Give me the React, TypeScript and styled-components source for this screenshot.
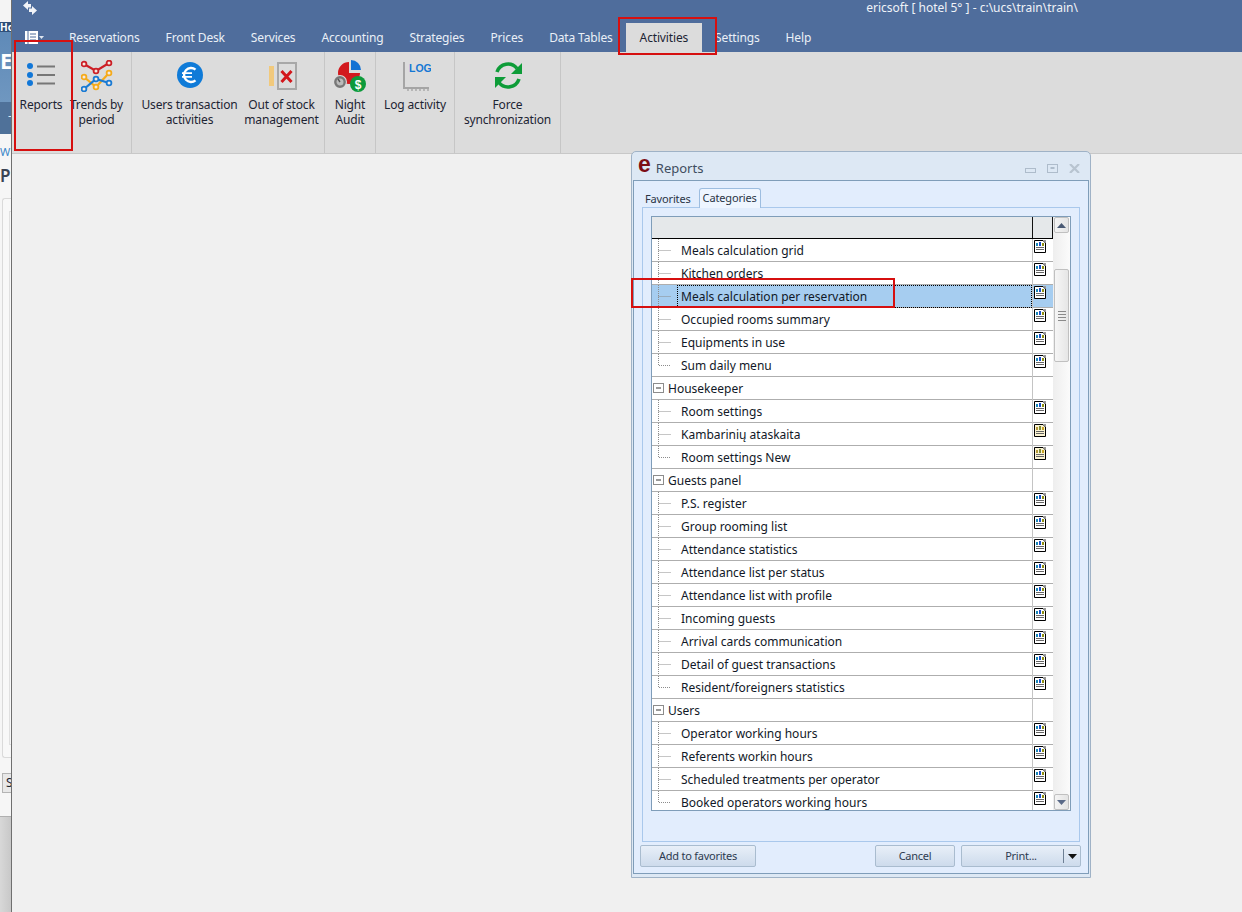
import React from 'react'
import styled, { createGlobalStyle } from 'styled-components'

const GlobalStyle = createGlobalStyle`
  *, *::before, *::after {
    box-sizing: border-box;
  }
  html, body {
    margin: 0;
    padding: 0;
    height: 912px;
    overflow: hidden;
    background: #f0f0f0;
    font-family: "Noto Sans", "Open Sans", sans-serif;
    font-size: 12px;
    color: #1c2433;
  }
`

const Page = styled.div`
  display: flex;
  width: 1242px;
  height: 912px;
  overflow: hidden;
  position: relative;
`

/* window behind the app, only 11px of it shows */
const BehindWindow = styled.div`
  width: 12px;
  flex: none;
  display: flex;
  flex-direction: column;
  overflow: hidden;
  background: #f6f6f6;
  border-right: 1px solid #6f6f6f;
`
const BehindTop = styled.div`
  height: 22px;
  flex: none;
  background: #f4f4f4;
`
const BehindHead = styled.div`
  height: 10px;
  flex: none;
  background: #2f4f78;
  color: #fff;
  font-size: 10px;
  font-weight: 700;
  line-height: 10px;
  white-space: nowrap;
`
const BehindBanner = styled.div`
  height: 70px;
  flex: none;
  background: linear-gradient(#5f8ab8, #6f97c0);
  color: #fff;
  font-size: 22px;
  font-weight: 700;
  line-height: 56px;
`
const BehindStrip = styled.div`
  height: 32px;
  flex: none;
  background: #4f7199;
  color: #dfe8f2;
  line-height: 28px;
  padding-left: 8px;
`
const BehindLink = styled.div`
  margin-top: 10px;
  height: 16px;
  flex: none;
  color: #3a86c8;
  font-size: 11px;
  line-height: 16px;
`
const BehindTitle = styled.div`
  margin-top: 5px;
  height: 22px;
  flex: none;
  color: #3b4454;
  font-size: 17px;
  font-weight: 600;
  line-height: 22px;
`
const BehindPanel = styled.div`
  margin: 11px 0 0 2px;
  height: 560px;
  flex: none;
  padding: 12px 0 12px 6px;
  border: 1px solid #dadada;
  border-right: 0;
  border-radius: 3px 0 0 3px;
  background: #f8f8f8;
`
const BehindInner = styled.div`
  height: 100%;
  border: 1px solid #e0e0e0;
  border-right: 0;
`
const BehindButton = styled.div`
  margin-top: 15px;
  margin-left: 2px;
  height: 20px;
  flex: none;
  border: 1px solid #b4b4b4;
  border-right: 0;
  background: #e8e8e8;
  font-size: 12px;
  line-height: 18px;
  padding-left: 3px;
`
const BehindFooter = styled.div`
  margin-top: 23px;
  flex: 1;
  border-top: 1px solid #b0b0b0;
  background: linear-gradient(90deg, #d8d8d8, #c8c8c8);
`

const Main = styled.div`
  flex: 1;
  display: flex;
  flex-direction: column;
  min-width: 0;
`
const TitleBar = styled.header`
  background: #4f6d9c;
  height: 52px;
  display: flex;
  flex-direction: column;
  flex: none;
`
const TitleRow = styled.div`
  height: 23px;
  flex: none;
  display: flex;
  justify-content: space-between;
  padding: 0 164px 0 10px;
`
const TitleText = styled.div`
  color: #f0f3f8;
  font-size: 12px;
  line-height: 15px;
`
const TabRow = styled.nav`
  display: flex;
  align-items: flex-end;
  height: 29px;
  padding-left: 13px;
`
const AppMenu = styled.div`
  width: 31px;
  height: 29px;
  display: flex;
  align-items: center;
  gap: 1px;
  flex: none;
`
const Tab = styled.div<{ $active?: boolean }>`
  height: 29px;
  line-height: 30px;
  padding: 0 ${p => (p.$active ? '14px' : '13px')};
  letter-spacing: -0.15px;
  color: ${p => (p.$active ? '#1c2433' : '#eaf0f7')};
  background: ${p => (p.$active ? '#dcdcdc' : 'transparent')};
  white-space: nowrap;
`

const Ribbon = styled.div`
  height: 102px;
  flex: none;
  display: flex;
  background: #dcdcdc;
  border-bottom: 1px solid #c8c8c8;
`
const RibbonGroup = styled.div`
  display: flex;
  gap: 8px;
  padding: 8px 8px 0;
  border-right: 1px solid #c6c6c6;
`
const RibbonButton = styled.div<{ $width: number }>`
  width: ${p => p.$width}px;
  display: flex;
  flex-direction: column;
  align-items: center;
  text-align: center;
  line-height: 15px;
`
const RibbonIcon = styled.div`
  height: 32px;
  margin-bottom: 5px;
  display: flex;
  justify-content: center;
`
const Label = styled.span`
  white-space: pre;
  letter-spacing: -0.15px;
`
const Body = styled.div`
  flex: 1;
  background: #f0f0f0;
`

const Dialog = styled.section`
  position: absolute;
  left: 631px;
  top: 151px;
  width: 460px;
  height: 727px;
  border: 1px solid #9fb2c6;
  border-radius: 5px 5px 0 0;
  background: #dde8f4;
  display: flex;
  flex-direction: column;
  padding: 0 1px 3px;
`
const DialogTitle = styled.div`
  height: 28px;
  flex: none;
  display: flex;
  align-items: center;
  padding: 4px 9px 0 5px;
  color: #3f4d60;
  font-size: 13px;
`
const Logo = styled.span`
  color: #7c0c14;
  font-family: "Liberation Sans", sans-serif;
  font-size: 23px;
  font-weight: 700;
  line-height: 20px;
  margin-right: 5px;
  margin-top: -8px;
`
const WindowButtons = styled.div`
  margin-left: auto;
  display: flex;
  gap: 11px;
  align-items: center;
`
const Frame = styled.div`
  flex: 1;
  border: 1px solid #7f9db9;
  background: #e2edfd;
  display: flex;
  flex-direction: column;
  padding: 7px 8px 0 6px;
  min-height: 0;
`
const DialogTabs = styled.div`
  display: flex;
  height: 19px;
  padding-left: 2px;
  flex: none;
`
const DialogTab = styled.div<{ $active?: boolean }>`
  height: ${p => (p.$active ? '20px' : '19px')};
  padding: ${p => (p.$active ? '0 3px' : '3px 8px 0 3px')};
  line-height: ${p => (p.$active ? '17px' : '16px')};
  font-size: 11px;
  letter-spacing: -0.15px;
  color: #2a3445;
  background: ${p => (p.$active ? '#eef5ff' : 'transparent')};
  border: ${p => (p.$active ? '1px solid #9dbde0' : '0')};
  border-bottom: 0;
  border-radius: 3px 3px 0 0;
  position: relative;
  z-index: 1;
`
const TabPanel = styled.div`
  height: 635px;
  flex: none;
  margin-left: 2px;
  border: 1px solid #a9c8ec;
  background: #e2edfd;
  padding: 8px 8px 0;
`
const Grid = styled.div`
  height: 595px;
  display: flex;
  border: 1px solid #7f9db9;
  background: #fff;
`
const Tree = styled.div`
  flex: 1;
  min-width: 0;
  overflow: hidden;
`
const TreeHeader = styled.div`
  height: 22px;
  display: grid;
  grid-template-columns: 381px 20px;
  background: #e5e8ea;
  border-bottom: 1px solid #000;
`
const HeaderCell = styled.div`
  border-right: 1px solid #111;
`
const Row = styled.div<{ $selected?: boolean }>`
  height: 23px;
  display: grid;
  grid-template-columns: 381px 20px;
  border-bottom: 1px solid #aeaeae;
  background: ${p => (p.$selected ? '#a6cdf0' : '#fff')};
`
const NameCell = styled.div`
  display: flex;
  align-items: stretch;
  border-right: 1px solid #c4c4c4;
  min-width: 0;
`
const RowName = styled.div<{ $selected?: boolean }>`
  flex: 1;
  line-height: 23px;
  padding-left: ${p => (p.$selected ? '4px' : '0')};
  margin-left: ${p => (p.$selected ? '-4px' : '0')};
  outline: ${p => (p.$selected ? '1px dotted #000' : 'none')};
  outline-offset: -1px;
  color: #111827;
  white-space: nowrap;
`
const IconCell = styled.div`
  padding: 1px 0 0 1px;
`
const Scrollbar = styled.div`
  width: 17px;
  flex: none;
  display: flex;
  flex-direction: column;
  background: linear-gradient(90deg, #eeeeee, #fbfbfb);
  padding: 0 1px;
`
const ScrollButton = styled.div`
  height: 16px;
  flex: none;
  border: 1px solid #c0c0c0;
  border-radius: 2px;
  background: linear-gradient(90deg, #f4f4f4, #e4e4e4);
  display: flex;
  align-items: center;
  justify-content: center;
`
const ScrollTrack = styled.div`
  flex: 1;
  padding-top: 36px;
`
const ScrollThumb = styled.div`
  height: 93px;
  border: 1px solid #c0c0c0;
  border-radius: 2px;
  background: linear-gradient(90deg, #f6f6f6, #e6e6e6);
  display: flex;
  flex-direction: column;
  gap: 2px;
  align-items: center;
  justify-content: center;
`
const Grip = styled.div`
  width: 8px;
  height: 1px;
  flex: none;
  background: #8a8a8a;
`
const ButtonRow = styled.div`
  display: flex;
  padding-top: 3px;
  margin-right: -1px;
`
const DialogButton = styled.div<{ $width: number; $gap?: number }>`
  width: ${p => p.$width}px;
  height: 22px;
  margin-left: ${p => p.$gap ?? 0}px;
  border: 1px solid #a9bccf;
  border-radius: 2px;
  background: linear-gradient(#e8eff8, #cddbec);
  color: #2e3b50;
  font-size: 11px;
  letter-spacing: -0.25px;
  line-height: 20px;
  text-align: center;
  position: relative;
`
const Spacer = styled.div`
  flex: 1;
`
const PrintCaret = styled.div`
  position: absolute;
  left: 101px;
  top: 3px;
  width: 14px;
  height: 14px;
  border-left: 1px solid #6d7f94;
  display: flex;
  align-items: center;
  justify-content: flex-end;
`
const Mark = styled.div<{ $x: number; $y: number; $w: number; $h: number }>`
  position: absolute;
  left: ${p => p.$x}px;
  top: ${p => p.$y}px;
  width: ${p => p.$w}px;
  height: ${p => p.$h}px;
  border: 2px solid #d60f0f;
  pointer-events: none;
`

const ReportsIcon = () => (
  <svg width="32" height="32" viewBox="0 0 32 32">
    <circle cx="5" cy="6" r="3" fill="#1177d8" />
    <circle cx="5" cy="15" r="3" fill="#1177d8" />
    <circle cx="5" cy="23" r="3" fill="#1177d8" />
    <path d="M12 6.500h18M12 15h18M12 23.500h18" stroke="#777" strokeWidth="2" />
  </svg>
)

const TrendLine = ({ pts, color }: { pts: number[][]; color: string }) => (
  <g>
    <polyline points={pts.map(p => p.join(',')).join(' ')} fill="none" stroke={color} strokeWidth="2.200" />
    {pts.map(p => (
      <circle key={p.join()} cx={p[0]} cy={p[1]} r="2.400" fill="#f4e9e0" stroke={color} strokeWidth="1.800" />
    ))}
  </g>
)

const TrendsIcon = () => (
  <svg width="32" height="32" viewBox="0 0 32 32">
    <TrendLine color="#cc1f26" pts={[[3, 4], [15, 11], [28, 3]]} />
    <TrendLine color="#f5ab1b" pts={[[3, 17], [15, 27], [28, 13]]} />
    <TrendLine color="#1a7bd4" pts={[[3, 29], [15, 19], [28, 23]]} />
  </svg>
)

const EuroIcon = () => (
  <svg width="32" height="32" viewBox="0 0 32 32">
    <circle cx="16" cy="15" r="13" fill="#0f7bd8" />
    <path d="M21.500 9.600a7 7 0 1 0 0 10.800" fill="none" stroke="#fff" strokeWidth="2.400" />
    <path d="M8 13.200h10M8 16.800h10" stroke="#fff" strokeWidth="1.800" />
  </svg>
)

const StockIcon = () => (
  <svg width="32" height="32" viewBox="0 0 32 32">
    <rect x="3" y="6" width="5" height="20" fill="#f1c97c" />
    <rect x="12" y="3" width="18" height="26" fill="none" stroke="#a8a8a8" strokeWidth="2" />
    <path d="M15.500 11l10 11M25.500 11l-10 11" stroke="#d3171c" strokeWidth="3" />
  </svg>
)

const AuditIcon = () => (
  <svg width="32" height="32" viewBox="0 0 32 32">
    <path d="M15 12V2A11 11 0 1 0 26 13H15z" fill="#d2191e" />
    <path d="M17 0A10 10 0 0 1 27 10H17z" fill="#1272d4" />
    <circle cx="6" cy="22" r="7" fill="#dcdcdc" />
    <circle cx="6" cy="22" r="4.700" fill="#bbb" stroke="#777" strokeWidth="2.400" />
    <path d="M6 22l-2-3" stroke="#555" strokeWidth="1.400" />
    <circle cx="24" cy="24" r="8" fill="#0d9a3b" />
    <text x="24" y="28.500" textAnchor="middle" fontSize="12" fontWeight="700" fontFamily="Liberation Sans" fill="#fff">$</text>
  </svg>
)

const LogIcon = () => (
  <svg width="32" height="32" viewBox="0 0 32 32">
    <path d="M5 2v26h25" fill="none" stroke="#a5a5a5" strokeWidth="2" />
    <path d="M9 29v2M13 29v2M17 29v2M21 29v2M25 29v2M29 29v2" stroke="#8f8f8f" strokeWidth="1" />
    <text x="10" y="11.500" fontSize="10.500" fontWeight="700" fontFamily="Liberation Sans" fill="#1477d4">LOG</text>
  </svg>
)

const SyncIcon = () => (
  <svg width="32" height="32" viewBox="0 0 32 32">
    <path d="M5 12A11.500 11.500 0 0 1 25 8.500" fill="none" stroke="#0d9c38" strokeWidth="3.600" />
    <path d="M30 3v11H19z" fill="#0d9c38" />
    <path d="M27 19A11.500 11.500 0 0 1 7 22.500" fill="none" stroke="#0d9c38" strokeWidth="3.600" />
    <path d="M3 28V17h11z" fill="#0d9c38" />
  </svg>
)

const ReportDoc = ({ tint }: { tint?: boolean }) => (
  <svg width="12" height="13" viewBox="0 0 12 13" style={{ display: 'block' }}>
    <path d="M.5.500h8.500l2.500 2.500v9.500H.5z" fill={tint ? '#fbf3d2' : '#fff'} stroke="#000" />
    <path d="M9 0h3v3z" fill="#999" />
    <rect x="2" y="3" width="2" height="3" fill={tint ? '#b59a3a' : '#1a88b8'} />
    <rect x="5" y="2" width="2" height="4" fill={tint ? '#7c8c3a' : '#1a50c8'} />
    <rect x="8" y="3" width="2" height="3" fill={tint ? '#c9a526' : '#8f8f12'} />
    <path d="M2 7.500h8M2 9.500h8" stroke="#666" />
  </svg>
)

const ChildConnector = ({ last }: { last?: boolean }) => (
  <svg width="29" height="22" viewBox="0 0 29 22" style={{ flex: 'none' }}>
    <path d={last ? 'M6.500 0v11.500H19' : 'M6.500 0v23M6.500 11.500H19'} stroke="#8c8c8c" strokeDasharray="1 1" fill="none" />
  </svg>
)

const GroupToggle = () => (
  <svg width="16" height="22" viewBox="0 0 16 22" style={{ flex: 'none' }}>
    <rect x="1.500" y="6.500" width="10" height="9" fill="#fff" stroke="#8c8c8c" />
    <path d="M4 11h5" stroke="#333" />
  </svg>
)

const AppMenuIcon = () => (
  <svg width="13" height="13" viewBox="0 0 13 13">
    <rect x="0" y="0" width="13" height="13" fill="#fff" />
    <path d="M3 0v13" stroke="#4f6d9c" />
    <path d="M5 3h6M5 6h6M5 9h6" stroke="#4f6d9c" />
  </svg>
)

const SwitchIcon = () => (
  <svg width="16" height="16" viewBox="0 0 16 16">
    <path d="M1 5.500l5-4.500v3h3v3.500H6V10zM15 10.500l-5 4.500v-3H7V8.500h3V6z" fill="#f2f4f8" />
  </svg>
)

const Triangle = ({ up, color, small }: { up?: boolean; color: string; small?: boolean }) => (
  <svg width={small ? 5 : 9} height={small ? 3 : 5} viewBox="0 0 9 5">
    <path d={up ? 'M0 5L4.500 0 9 5z' : 'M0 0L4.500 5 9 0z'} fill={color} />
  </svg>
)

const WindowGlyphs = () => (
  <WindowButtons>
    <svg width="11" height="5" viewBox="0 0 11 5" style={{ marginTop: 5 }}>
      <rect x=".5" y=".5" width="10" height="4" fill="none" stroke="#aebccb" />
    </svg>
    <svg width="11" height="9" viewBox="0 0 11 9">
      <rect x=".5" y=".5" width="10" height="8" fill="none" stroke="#aebccb" />
      <rect x="3.500" y="3" width="4" height="2" fill="#aebccb" />
    </svg>
    <svg width="11" height="9" viewBox="0 0 11 9">
      <path d="M1 0l9 9M10 0L1 9" stroke="#b8c4d0" strokeWidth="2.200" />
    </svg>
  </WindowButtons>
)

const ribbon = [
  [
    { label: 'Reports', width: 42, icon: <ReportsIcon /> },
    { label: 'Trends by\nperiod', width: 53, icon: <TrendsIcon /> },
  ],
  [
    { label: 'Users transaction\nactivities', width: 99, icon: <EuroIcon /> },
    { label: 'Out of stock\nmanagement', width: 69, icon: <StockIcon /> },
  ],
  [{ label: 'Night\nAudit', width: 34, icon: <AuditIcon /> }],
  [{ label: 'Log activity', width: 62, icon: <LogIcon /> }],
  [{ label: 'Force\nsynchronization', width: 89, icon: <SyncIcon /> }],
]

const tabs = ['Reservations', 'Front Desk', 'Services', 'Accounting', 'Strategies', 'Prices', 'Data Tables', 'Activities', 'Settings', 'Help']

type Item = { name: string; group?: boolean; last?: boolean; selected?: boolean; tint?: boolean }

const rows: Item[] = [
  { name: 'Meals calculation grid' },
  { name: 'Kitchen orders' },
  { name: 'Meals calculation per reservation', selected: true },
  { name: 'Occupied rooms summary' },
  { name: 'Equipments in use' },
  { name: 'Sum daily menu', last: true },
  { name: 'Housekeeper', group: true },
  { name: 'Room settings' },
  { name: 'Kambarinių ataskaita', tint: true },
  { name: 'Room settings New', tint: true, last: true },
  { name: 'Guests panel', group: true },
  { name: 'P.S. register' },
  { name: 'Group rooming list' },
  { name: 'Attendance statistics' },
  { name: 'Attendance list per status' },
  { name: 'Attendance list with profile' },
  { name: 'Incoming guests' },
  { name: 'Arrival cards communication' },
  { name: 'Detail of guest transactions' },
  { name: 'Resident/foreigners statistics', last: true },
  { name: 'Users', group: true },
  { name: 'Operator working hours' },
  { name: 'Referents workin hours' },
  { name: 'Scheduled treatments per operator' },
  { name: 'Booked operators working hours', last: true },
]

export default function App() {
  return (
    <>
      <GlobalStyle />
      <Page>
        <BehindWindow>
          <BehindTop />
          <BehindHead>Ho</BehindHead>
          <BehindBanner>E</BehindBanner>
          <BehindStrip>-</BehindStrip>
          <BehindLink>W</BehindLink>
          <BehindTitle>P</BehindTitle>
          <BehindPanel>
            <BehindInner />
          </BehindPanel>
          <BehindButton>S</BehindButton>
          <BehindFooter />
        </BehindWindow>

        <Main>
          <TitleBar>
            <TitleRow>
              <SwitchIcon />
              <TitleText>ericsoft [ hotel 5° ] - c:\ucs\train\train\</TitleText>
            </TitleRow>
            <TabRow>
              <AppMenu>
                <AppMenuIcon />
                <Triangle small color="#dfe6f0" />
              </AppMenu>
              {tabs.map(t => (
                <Tab key={t} $active={t === 'Activities'}>{t}</Tab>
              ))}
            </TabRow>
          </TitleBar>

          <Ribbon>
            {ribbon.map(group => (
              <RibbonGroup key={group[0].label}>
                {group.map(b => (
                  <RibbonButton key={b.label} $width={b.width}>
                    <RibbonIcon>{b.icon}</RibbonIcon>
                    <Label>{b.label}</Label>
                  </RibbonButton>
                ))}
              </RibbonGroup>
            ))}
          </Ribbon>
          <Body />
        </Main>

        <Dialog>
          <DialogTitle>
            <Logo>e</Logo>
            Reports
            <WindowGlyphs />
          </DialogTitle>
          <Frame>
            <DialogTabs>
              <DialogTab>Favorites</DialogTab>
              <DialogTab $active>Categories</DialogTab>
            </DialogTabs>
            <TabPanel>
              <Grid>
                <Tree>
                  <TreeHeader>
                    <HeaderCell />
                    <HeaderCell />
                  </TreeHeader>
                  {rows.map(r => (
                    <Row key={r.name} $selected={r.selected}>
                      <NameCell>
                        {r.group ? <GroupToggle /> : <ChildConnector last={r.last} />}
                        <RowName $selected={r.selected}>{r.name}</RowName>
                      </NameCell>
                      <IconCell>{!r.group && <ReportDoc tint={r.tint} />}</IconCell>
                    </Row>
                  ))}
                </Tree>
                <Scrollbar>
                  <ScrollButton><Triangle up color="#4a5a74" /></ScrollButton>
                  <ScrollTrack>
                    <ScrollThumb>
                      <Grip />
                      <Grip />
                      <Grip />
                      <Grip />
                    </ScrollThumb>
                  </ScrollTrack>
                  <ScrollButton><Triangle color="#5a6a88" /></ScrollButton>
                </Scrollbar>
              </Grid>
            </TabPanel>
            <ButtonRow>
              <DialogButton $width={116}>Add to favorites</DialogButton>
              <Spacer />
              <DialogButton $width={80}>Cancel</DialogButton>
              <DialogButton $width={120} $gap={6}>
                Print...
                <PrintCaret><Triangle color="#111" /></PrintCaret>
              </DialogButton>
            </ButtonRow>
          </Frame>
        </Dialog>

        <Mark $x={14} $y={40} $w={59} $h={111} />
        <Mark $x={618} $y={17} $w={99} $h={38} />
        <Mark $x={631} $y={278} $w={264} $h={30} />
      </Page>
    </>
  )
}
